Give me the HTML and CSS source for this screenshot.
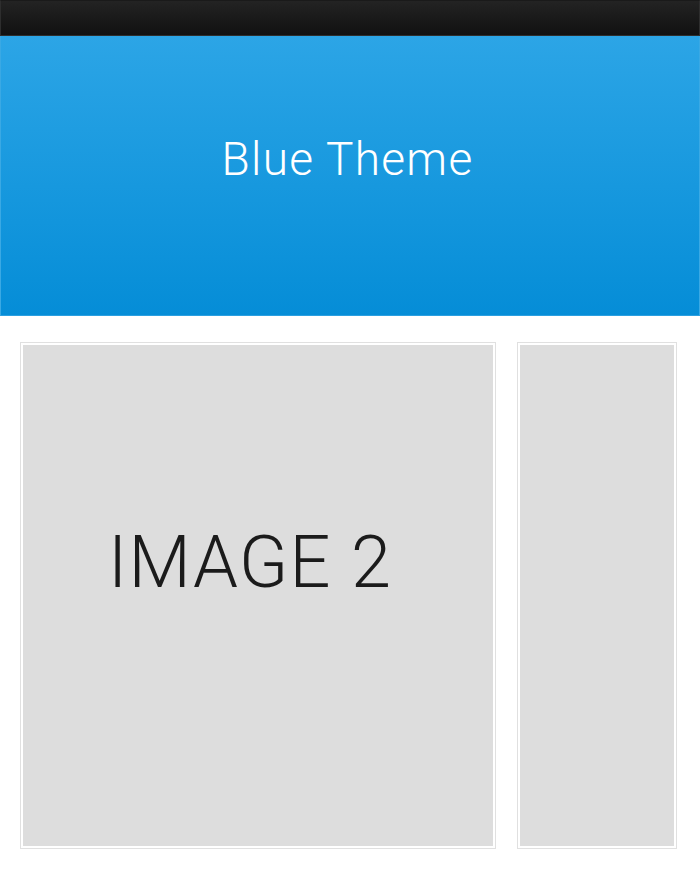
FILE: index.html
```html
<!DOCTYPE html>
<html lang="en">
<head>
    <meta charset="UTF-8">
    <title>Blue Theme</title>
    <link rel="stylesheet" href="styles.css">
</head>
<body>
    <div class="topbar"></div>
    <div class="header">
        <h1>Blue Theme</h1>
    </div>
    <div class="content">
        <div class="box main">
            <div class="inner">IMAGE 2</div>
        </div>
        <div class="box side">
            <div class="inner"></div>
        </div>
    </div>
</body>
</html>
```

FILE: styles.css
```css
*{
    padding: 0;
    margin: 0;
    box-sizing: border-box;
}
body{
    background-color: #fff;
    font-family: Roboto, "Liberation Sans", sans-serif;
}
.topbar{
    height: 36px;
    background: linear-gradient(#232323, #111);
    border: 1px solid #2e2e2e;
    border-top-color: #1a1a1a;
}
.header{
    height: 280px;
    background: linear-gradient(#2ca5e6, #058dd7);
    border: 1px solid #3aa9e4;
    border-top: none;
    border-bottom-color: #2b9fe0;
    text-align: center;
}
.header h1{
    font-weight: 300;
    font-size: 46px;
    letter-spacing: 1.3px;
    color: #fff;
    padding-top: 95px;
    padding-right: 5px;
    line-height: 56px;
}
.content{
    display: grid;
    grid-template-columns: 476px 160px;
    gap: 21px;
    padding: 26px 0 0 20px;
}
.box{
    height: 507px;
    border: 1px solid #e0e0e0;
    padding: 2px;
    background-color: #fff;
}
.box .inner{
    height: 100%;
    background-color: #ddd;
}
.main .inner{
    font-weight: 300;
    font-size: 72px;
    letter-spacing: 1.4px;
    color: #1b1b1b;
    padding: 176px 0 0 85px;
    line-height: 84px;
}
```
